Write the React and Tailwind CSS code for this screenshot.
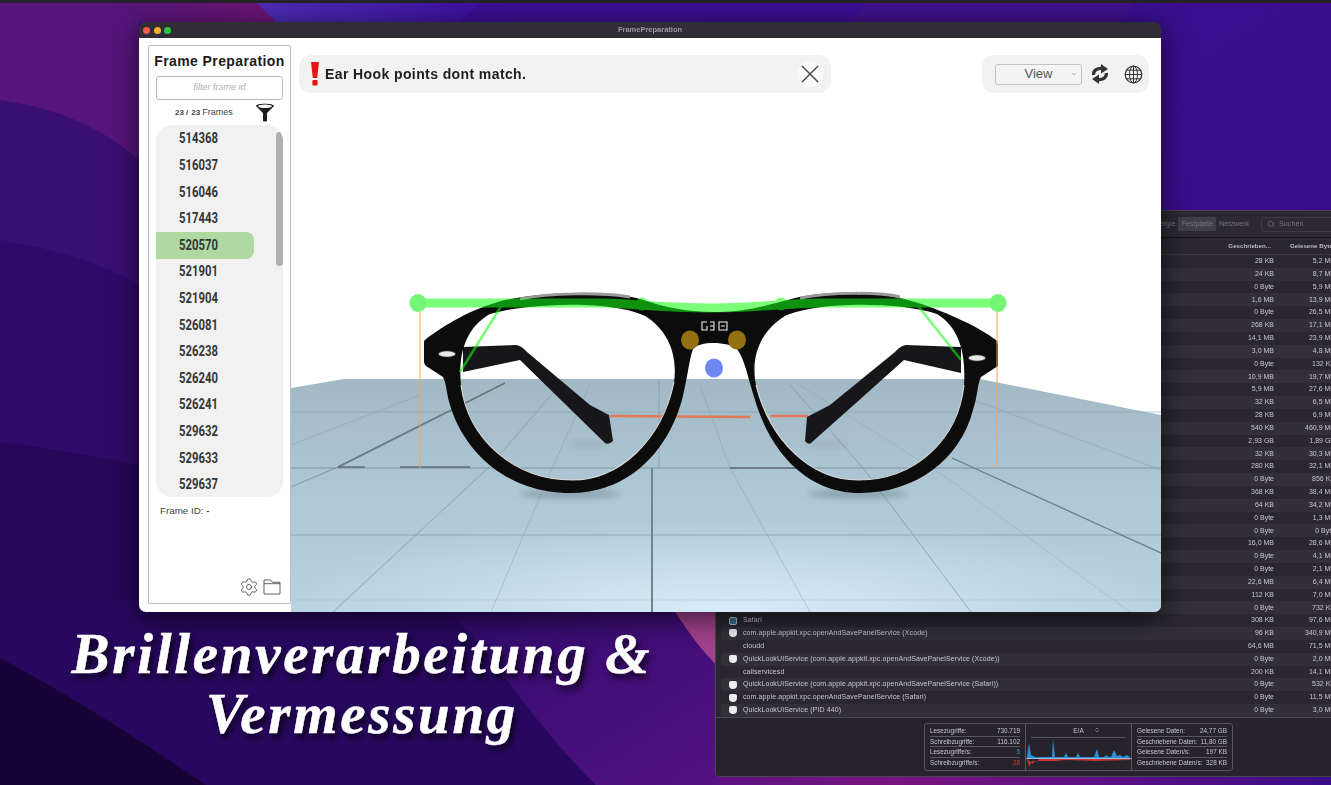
import { Settings, Search, ChevronDown, ChevronsUpDown } from 'lucide-react';

const frames = ['514368', '516037', '516046', '517443', '520570', '521901', '521904', '526081', '526238', '526240', '526241', '529632', '529633', '529637'];

const processes = [
  ['', '28 KB', '5,2 MB'], ['', '24 KB', '8,7 MB'], ['', '0 Byte', '5,9 MB'], ['', '1,6 MB', '13,9 MB'],
  ['', '0 Byte', '26,5 MB'], ['', '268 KB', '17,1 MB'], ['', '14,1 MB', '23,9 MB'], ['', '3,0 MB', '4,8 MB'],
  ['', '0 Byte', '132 KB'], ['', '10,9 MB', '19,7 MB'], ['', '5,9 MB', '27,6 MB'], ['', '32 KB', '6,5 MB'],
  ['', '28 KB', '6,9 MB'], ['', '540 KB', '460,9 MB'], ['', '2,93 GB', '1,89 GB'], ['', '32 KB', '30,3 MB'],
  ['', '280 KB', '32,1 MB'], ['', '0 Byte', '856 KB'], ['', '368 KB', '38,4 MB'], ['', '64 KB', '34,2 MB'],
  ['', '0 Byte', '1,3 MB'], ['', '0 Byte', '0 Byte'], ['', '16,0 MB', '28,6 MB'], ['', '0 Byte', '4,1 MB'],
  ['', '0 Byte', '2,1 MB'], ['', '22,6 MB', '6,4 MB'], ['', '112 KB', '7,0 MB'], ['', '0 Byte', '732 KB'],
  ['Safari', '308 KB', '97,6 MB', 'safari'],
  ['com.apple.appkit.xpc.openAndSavePanelService (Xcode)', '96 KB', '340,9 MB', 'shield'],
  ['cloudd', '64,6 MB', '71,5 MB'],
  ['QuickLookUIService (com.apple.appkit.xpc.openAndSavePanelService (Xcode))', '0 Byte', '2,0 MB', 'shield'],
  ['callservicesd', '200 KB', '14,1 MB'],
  ['QuickLookUIService (com.apple.appkit.xpc.openAndSavePanelService (Safari))', '0 Byte', '532 KB', 'shield'],
  ['com.apple.appkit.xpc.openAndSavePanelService (Safari)', '0 Byte', '11,5 MB', 'shield'],
  ['QuickLookUIService (PID 440)', '0 Byte', '3,0 MB', 'shield'],
];

const leftStats = [
  ['Lesezugriffe:', '730.719', 'text-[#c9c7cd]'],
  ['Schreibzugriffe:', '116.102', 'text-[#c9c7cd]'],
  ['Lesezugriffe/s:', '5', 'text-[#2f8fd0]'],
  ['Schreibzugriffe/s:', '28', 'text-[#d23a3a]'],
];

const rightStats = [
  ['Gelesene Daten:', '24,77 GB'],
  ['Geschriebene Daten:', '11,80 GB'],
  ['Gelesene Daten/s:', '197 KB'],
  ['Geschriebene Daten/s:', '328 KB'],
];

function Wallpaper() {
  return (
    <svg className="absolute inset-0 w-full h-full" viewBox="0 0 1331 785" preserveAspectRatio="none">
      <defs>
        <linearGradient id="wallRight" x1="0" y1="0" x2="1" y2="1">
          <stop offset="0" stopColor="#3d0f98" />
          <stop offset="1" stopColor="#360b82" />
        </linearGradient>
        <linearGradient id="wallBottom" x1="0" y1="0" x2="1" y2="1">
          <stop offset="0" stopColor="#2f0a6a" />
          <stop offset="1" stopColor="#551285" />
        </linearGradient>
        <linearGradient id="wallMagenta" x1="0" y1="0" x2="1" y2="0">
          <stop offset="0" stopColor="#56157a" />
          <stop offset="1" stopColor="#6c1472" />
        </linearGradient>
        <linearGradient id="wallBlue" x1="0" y1="0" x2="1" y2="0">
          <stop offset="0" stopColor="#4d2cb2" />
          <stop offset="1" stopColor="#3d10a0" />
        </linearGradient>
        <linearGradient id="wallEdge" x1="0" y1="0" x2="1" y2="0">
          <stop offset="0" stopColor="#4a1085" />
          <stop offset="0.4" stopColor="#7a1480" />
          <stop offset="1" stopColor="#3a0c88" />
        </linearGradient>
      </defs>
      <rect width="1331" height="785" fill="url(#wallRight)" />
      <path d="M0 0H139V200H0Z" fill="#55157a" />
      <path d="M139 0H255L276 22H139Z" fill="url(#wallMagenta)" />
      <path d="M257 3H480L460 22H276Z" fill="url(#wallBlue)" />
      <path d="M865 3L850 22H1120L1135 3Z" fill="#40108a" />
      <path d="M0 100C60 108 105 130 139 160V640H0Z" fill="#3a0f72" />
      <path d="M0 240C60 250 105 265 139 285V640H0Z" fill="#300a68" />
      <path d="M0 442C60 450 100 458 139 465V785H0Z" fill="#260758" />
      <rect x="0" y="600" width="760" height="185" fill="#28085f" />
      <rect x="600" y="775" width="731" height="10" fill="url(#wallEdge)" />
      <path d="M445 610C480 640 490 660 505 677C540 725 570 760 596 785H720V610Z" fill="url(#wallBottom)" />
      <path d="M674 610C690 635 705 655 719 667V610Z" fill="#a0428c" />
      <path d="M0 658C70 695 140 740 206 785H0Z" fill="#170437" />
      <rect width="1331" height="3" fill="#252328" />
    </svg>
  );
}

function FilterIcon() {
  return (
    <svg width="20" height="19" viewBox="0 0 20 19" className="block">
      <path d="M1 3 C1 0 19 0 19 3 L12 10 V18 Q10 19 8 18 V10 Z" fill="#1c1c1c" />
      <ellipse cx="10" cy="3.2" rx="6.8" ry="1.7" fill="#fff" />
    </svg>
  );
}

function FolderIcon() {
  return (
    <svg width="18" height="16" viewBox="0 0 19 17" fill="none" stroke="#555" strokeWidth="1" className="block">
      <path d="M1 5V1H8L10 3.5H18V16H1V5H18" />
    </svg>
  );
}

function GlobeIcon() {
  return (
    <svg width="19" height="19" viewBox="0 0 19 19" fill="none" stroke="#333" strokeWidth="1" className="block">
      <circle cx="9.5" cy="9.5" r="8.3" strokeWidth="1.2" />
      <ellipse cx="9.5" cy="9.5" rx="4" ry="8.3" />
      <path d="M9.5 1.2V17.8M1.2 9.5H17.8M2.6 5.2H16.4M2.6 13.8H16.4" />
    </svg>
  );
}

function SyncIcon() {
  return (
    <svg width="18" height="20" viewBox="0 0 18 20" className="block" fill="#333">
      <path d="M2.6 11C2.2 6.5 6 4 11 4.4" fill="none" stroke="#333" strokeWidth="3.2" />
      <path d="M10 0L17 5L10 9.5Z" />
      <path d="M15.4 9C15.8 13.5 12 16 7 15.6" fill="none" stroke="#333" strokeWidth="3.2" />
      <path d="M8 10.5L1 15L8 20Z" />
    </svg>
  );
}

function AlertIcon() {
  return (
    <svg width="10" height="24" viewBox="0 0 10 24" className="block" fill="#e61414">
      <path d="M1 0H9L7.2 16H2.8Z" />
      <rect x="2.4" y="18" width="5.2" height="5.6" rx="1" />
    </svg>
  );
}

function Glasses() {
  return (
    <>
      <ellipse cx="570" cy="494" rx="50" ry="4" fill="#5b6d78" opacity="0.45" filter="url(#soft)" />
      <ellipse cx="858" cy="494" rx="50" ry="4" fill="#5b6d78" opacity="0.45" filter="url(#soft)" />
      <ellipse cx="590" cy="444" rx="22" ry="2" fill="#5b6d78" opacity="0.25" filter="url(#soft)" />
      <ellipse cx="826" cy="444" rx="22" ry="2" fill="#5b6d78" opacity="0.25" filter="url(#soft)" />

      {/* temples */}
      <path d="M610 416L750 417M770 416H808" stroke="#e07a52" strokeWidth="2.4" />
      <path d="M463 347L516 345Q522 346 527 352L590 405L609 415L613 441Q609 445 605 443L520 360L463 372Z" fill="#17171a" />
      <path d="M961 347L906 345Q900 346 895 352L830 405L807 417L805 441Q808 445 811 443L904 360L961 373Z" fill="#17171a" />

      {/* front */}
      <path
        fillRule="evenodd"
        fill="#0d0c0d"
        d="M426 339C445 325 470 309 505 300C545 292 610 290 640 299C665 307 685 312 714 312C745 312 760 307 795 298C830 290 880 291 915 302C950 313 980 328 996 340Q998 342 998 345L998 366L981 377C977 385 978 395 973 410C960 460 915 493 860 493C805 493 770 450 755 400C747 375 745 360 737 349C730 342 700 340 693 349C689 360 688 375 682 400C668 450 630 493 570 493C510 493 465 455 450 405C446 392 447 385 443 377L426 366Q424 364 424 362V342Q424 340 426 339Z
           M490 314C530 303 610 300 645 316C668 330 678 355 674 382C662 440 620 480 572 480C515 480 468 440 461 385C458 355 465 328 490 314Z
           M937 314C900 302 820 301 785 316C762 330 750 355 756 385C770 440 810 480 858 480C915 480 958 440 964 385C966 355 960 328 937 314Z"
      />
      <path d="M461 385C468 440 515 480 572 480C620 480 662 440 674 382" fill="none" stroke="#d8d8d8" strokeWidth="1.1" />
      <path d="M756 385C770 440 810 480 858 480C915 480 958 440 964 385" fill="none" stroke="#d8d8d8" strokeWidth="1.1" />
      <path d="M520 299C550 293 600 292 630 297" fill="none" stroke="#9a9a9a" strokeWidth="3" />
      <path d="M800 298C830 292 880 292 900 297" fill="none" stroke="#9a9a9a" strokeWidth="3" />

      {/* temple screws and logo */}
      <ellipse cx="447" cy="354" rx="8.5" ry="3" fill="#e8e8e8" stroke="#555" strokeWidth="0.6" />
      <ellipse cx="977" cy="358" rx="8.5" ry="3" fill="#e8e8e8" stroke="#555" strokeWidth="0.6" />
      <path d="M707 322H702V330H707V326M710 322H714V330H710M710 326H714M719 322H727V330H719ZM721 326H725" fill="none" stroke="#eee" strokeWidth="1.1" />

      {/* measurement overlay */}
      <g opacity="0.55" fill="#10ff10" stroke="#10ff10">
        <path d="M418 303H600C625 303 660 308 712 308C760 308 790 303 820 303H998" fill="none" strokeWidth="9" />
        <path d="M505 300L460 372M915 302L961 360" fill="none" strokeWidth="2.6" />
        <circle cx="642" cy="304" r="6.5" stroke="none" />
        <circle cx="781" cy="304" r="6.5" stroke="none" />
      </g>
      <ellipse cx="418" cy="303" rx="8.5" ry="9" fill="#72f572" />
      <ellipse cx="998" cy="303" rx="8.5" ry="9" fill="#72f572" />
      <path d="M420 312V468M997 312V468" stroke="#f2a55a" strokeWidth="1" />
      <ellipse cx="690" cy="340" rx="9" ry="9.5" fill="#94700f" />
      <ellipse cx="737" cy="340" rx="9" ry="9.5" fill="#94700f" />
      <ellipse cx="714" cy="368" rx="9" ry="9.5" fill="#6f86f7" />
    </>
  );
}

function Scene() {
  return (
    <svg className="absolute inset-0 w-full h-full" viewBox="139 38 1022 574">
      <defs>
        <linearGradient id="floor" x1="0" y1="0" x2="0" y2="1">
          <stop offset="0" stopColor="#a2b8c5" />
          <stop offset="0.5" stopColor="#aec8d6" />
          <stop offset="1" stopColor="#b6d0de" />
        </linearGradient>
        <radialGradient id="floorGlow" cx="0.5" cy="1" r="0.55">
          <stop offset="0" stopColor="#d6ecf8" stopOpacity="1" />
          <stop offset="1" stopColor="#d6ecf8" stopOpacity="0" />
        </radialGradient>
        <filter id="soft" x="-30%" y="-100%" width="160%" height="300%">
          <feGaussianBlur stdDeviation="3" />
        </filter>
      </defs>
      <path d="M291 388L344 379H980L1161 415V612H291Z" fill="url(#floor)" />
      <path d="M291 440H1161V612H291Z" fill="url(#floorGlow)" />
      <g fill="none" stroke="#8097a4" strokeWidth="1">
        <path d="M291 412H1161" opacity="0.5" />
        <path d="M291 535H1161" opacity="0.7" />
        <path d="M291 600H1161" opacity="0.2" />
        <path d="M659 380V468" opacity="0.7" />
        <path d="M333 612L488 468L560 385" opacity="0.7" />
        <path d="M491 612L552 468L590 385" opacity="0.4" />
        <path d="M810 612L730 468L700 385" opacity="0.4" />
        <path d="M971 612L863 468L790 385" opacity="0.7" />
        <path d="M1130 612L950 480L800 385" opacity="0.3" />
        <path d="M291 445L420 395" opacity="0.4" />
        <path d="M1161 470L960 395" opacity="0.4" />
        <path d="M291 487L338 467" />
      </g>
      <path d="M291 468H1161" stroke="#7f95a2" strokeWidth="1.1" />
      <path d="M338 467L505 383" stroke="#66787f" strokeWidth="1.8" fill="none" />
      <path d="M338 467H365M400 467H470M730 468H800" stroke="#5f6f78" strokeWidth="1.6" />
      <path d="M952 458L1161 553" stroke="#687d89" strokeWidth="1.3" />
      <path d="M652 468V612" stroke="#71868f" strokeWidth="2" />
      <Glasses />
    </svg>
  );
}

function Sidebar() {
  return (
    <aside className="relative ml-[9px] mt-[7px] w-[143px] h-[559px] shrink-0 bg-white border border-[#bdbdbd] rounded-[2px] flex flex-col px-[7px]">
      <h1 className="mt-[6px] -mx-[6px] text-center text-[14px] leading-[19px] font-bold tracking-[0.4px] text-[#1b1b1b] whitespace-nowrap">Frame Preparation</h1>
      <div className="mt-[5px] h-[24px] border border-[#bbbbbb] rounded-[3px] flex items-center justify-center text-[9px] italic text-[#b0b0b0]">filter frame id</div>
      <div className="relative h-[25px] flex items-center pl-[19px] text-[9px] text-[#444]">
        <span className="font-bold text-[8px] mr-[3px]">23 /</span>
        <span className="font-bold text-[8px] mr-[2px]">23</span>
        <span>Frames</span>
        <span className="absolute right-[8px] top-[3px]"><FilterIcon /></span>
      </div>
      <div className="relative h-[372px] pt-[1px] bg-[#f1f1f1] rounded-2xl overflow-hidden">
        {frames.map((f) => (
          <div
            key={f}
            className={`h-[26.6px] w-[98px] flex items-center pl-[23px] rounded-r-lg ${f === '520570' ? 'bg-[#b0d9a2]' : ''}`}
          >
            <span className="inline-block origin-left scale-x-[0.78] text-[14.5px] font-bold text-[#353535] font-['Roboto',sans-serif]">{f}</span>
          </div>
        ))}
        <div className="absolute right-0 top-[7px] w-[7px] h-[134px] rounded-full bg-[#b0b0b0]" />
      </div>
      <p className="mt-[7px] ml-[4px] text-[9.8px] leading-[13px] text-[#444]">Frame ID: <b>-</b></p>
      <div className="mt-auto mb-[6px] mr-[2px] flex justify-end items-center gap-[4px]">
        <Settings size={20} strokeWidth={1} className="text-[#444]" />
        <FolderIcon />
      </div>
    </aside>
  );
}

function MainWindow() {
  return (
    <div className="absolute left-[139px] top-[22px] w-[1022px] h-[590px] flex flex-col rounded-[7px] overflow-hidden shadow-[0_6px_28px_rgba(0,0,0,0.65)] font-['Liberation_Sans',sans-serif]">
      <div className="relative h-[16px] shrink-0 bg-[#302e34] flex items-center gap-[3.5px] pl-[4px]">
        <span className="w-[7px] h-[7px] rounded-full bg-[#f05a50]" />
        <span className="w-[7px] h-[7px] rounded-full bg-[#f5b02e]" />
        <span className="w-[7px] h-[7px] rounded-full bg-[#2dc840]" />
        <span className="absolute inset-x-0 text-center text-[7.5px] font-bold text-[#9a989e]">FramePreparation</span>
      </div>
      <div className="relative flex-1 bg-white flex">
        <Scene />
        <Sidebar />
        <div className="relative ml-[8px] mt-[17px] w-[532px] h-[38px] bg-[#f2f2f2] rounded-xl flex items-center pl-[11px]">
          <AlertIcon />
          <span className="ml-[5px] mt-[1px] text-[14px] font-bold tracking-[0.4px] text-[#1e1e1e]">Ear Hook points dont match.</span>
          <div className="absolute right-[8px] top-[6px] w-[26px] h-[26px] rounded-full bg-[#f9f9f9] flex items-center justify-center">
            <svg width="20" height="20" viewBox="0 0 20 20" stroke="#444" strokeWidth="1.4"><path d="M2 2L18 18M18 2L2 18" /></svg>
          </div>
        </div>
        <div className="relative ml-[151px] mt-[17px] w-[167px] h-[38px] bg-[#f2f2f2] rounded-xl flex items-center pl-[13px]">
          <div className="relative w-[87px] h-[21px] border border-[#c2c2c2] rounded-[3px] bg-[#f4f4f4] flex items-center justify-center text-[13px] text-[#555]">
            View
            <ChevronDown size={8} strokeWidth={1.5} className="absolute right-[3px] text-[#777]" />
          </div>
          <span className="ml-[9px]"><SyncIcon /></span>
          <span className="ml-[15px]"><GlobeIcon /></span>
        </div>
      </div>
    </div>
  );
}

function ProcessRow({ row, index }) {
  const [name, written, read, icon] = row;
  return (
    <div className={`h-[12.83px] ml-[5px] pl-[5px] rounded-l-[3px] flex items-center text-[7px] text-[#c8c6cc] ${index % 2 ? 'bg-[#322f38]' : ''}`}>
      <span className="w-[14px] shrink-0 flex justify-center">
        {icon === 'shield' && <span className="w-[8px] h-[8px] bg-[#ecebee] rounded-b-[4px] rounded-t-[2px]" />}
        {icon === 'safari' && <span className="w-[8px] h-[8px] bg-[#3f6f94] rounded-[2px] border border-[#9cc]" />}
      </span>
      <span className="ml-[3px] flex-1 whitespace-nowrap overflow-hidden tracking-[0.1px]">{name}</span>
      <span className="w-[60px] text-right">{written}</span>
      <span className="w-[61px] text-right">{read}</span>
    </div>
  );
}

function ActivityMonitor() {
  return (
    <div className="absolute left-[715px] top-[210px] w-[621px] h-[567px] flex flex-col rounded-[5px] overflow-hidden bg-[#2a2730] border border-[#48464c] blur-[0.35px] font-['Liberation_Sans',sans-serif]">
      <div className="h-[27px] shrink-0 bg-[#2c2932] border-b border-[#141216] flex items-center justify-end text-[7.2px] text-[#77747d]">
        <div className="flex items-center h-[14px] mr-[9px]">
          <span className="pr-[3px]">Energie</span>
          <span className="h-full px-[3px] flex items-center bg-[#413e48]">Festplatte</span>
          <span className="px-[3px]">Netzwerk</span>
        </div>
        <div className="w-[77px] h-[15px] -mr-[3px] rounded-[3px] border border-[#3c3942] flex items-center pl-[5px] gap-[4px]">
          <Search size={8} />
          <span>Suchen</span>
        </div>
      </div>
      <div className="h-[17px] shrink-0 bg-[#2a2730] border-b border-[#3a373f] flex items-center justify-end text-[6.2px] font-bold text-[#bdbbc1]">
        <span className="w-[60px] pr-[3px] text-right">Geschrieben...</span>
        <span className="w-[61px] pl-[16px] whitespace-nowrap">Gelesene Byte</span>
      </div>
      <div className="shrink-0">
        {processes.map((row, i) => <ProcessRow key={i} row={row} index={i} />)}
      </div>
      <div className="flex-1 bg-[#26232b] border-t border-[#4a484f] pt-[5px] pl-[208px]">
        <div className="w-[309px] h-[48px] rounded-[3px] border border-[#58565c] flex text-[6.4px] text-[#c9c7cd]">
          <div className="w-[101px] px-[5px] pt-[2px] border-r border-[#58565c]">
            {leftStats.map(([label, value, cls]) => (
              <div key={label} className="h-[10.7px] flex justify-between items-center border-b border-[#58565c] last:border-b-0 whitespace-nowrap">
                <span>{label}</span>
                <span className={cls}>{value}</span>
              </div>
            ))}
          </div>
          <div className="w-[106px] px-[5px] border-r border-[#58565c]">
            <div className="relative h-[14px] flex items-center justify-center border-b border-[#58565c]">
              E/A
              <ChevronsUpDown size={6} className="absolute right-[26px]" />
            </div>
            <svg width="106" height="32" viewBox="0 0 106 32" className="-ml-[5px] block">
              <path d="M1 19L3 5L5 17L9 19H24L26 19L27 1L29 19H38L40 15L42 19H50L52 15L54 19H68L71 11L73 19H78L80 17L83 19H85L88 12L91 18L94 17L97 19L101 17L104 19V21H1Z" fill="#2a8fd6" />
              <path d="M1 20L3 29L6 23L10 24L13 21H104V22L70 23L40 22L30 23H10L6 26Z" fill="#c83535" />
              <path d="M0 20.5H106" stroke="#d8d6dc" strokeWidth="0.6" />
            </svg>
          </div>
          <div className="flex-1 px-[5px] pt-[2px]">
            {rightStats.map(([label, value]) => (
              <div key={label} className="h-[10.7px] flex justify-between items-center border-b border-[#58565c] last:border-b-0 whitespace-nowrap">
                <span>{label}</span>
                <span>{value}</span>
              </div>
            ))}
          </div>
        </div>
      </div>
    </div>
  );
}

export default function App() {
  return (
    <div className="relative w-[1331px] h-[785px] overflow-hidden bg-[#3a0c88]">
      <Wallpaper />
      <ActivityMonitor />
      <MainWindow />
      <div className="absolute left-0 top-[624px] w-[724px] text-center text-white italic font-bold text-[57px] leading-[60px] tracking-[2.7px] font-['Liberation_Serif',serif] [-webkit-text-stroke:0.5px_white] [text-shadow:3px_5px_6px_rgba(0,0,0,0.75)]">
        <div>Brillenverarbeitung &amp;</div>
        <div>Vermessung</div>
      </div>
    </div>
  );
}
